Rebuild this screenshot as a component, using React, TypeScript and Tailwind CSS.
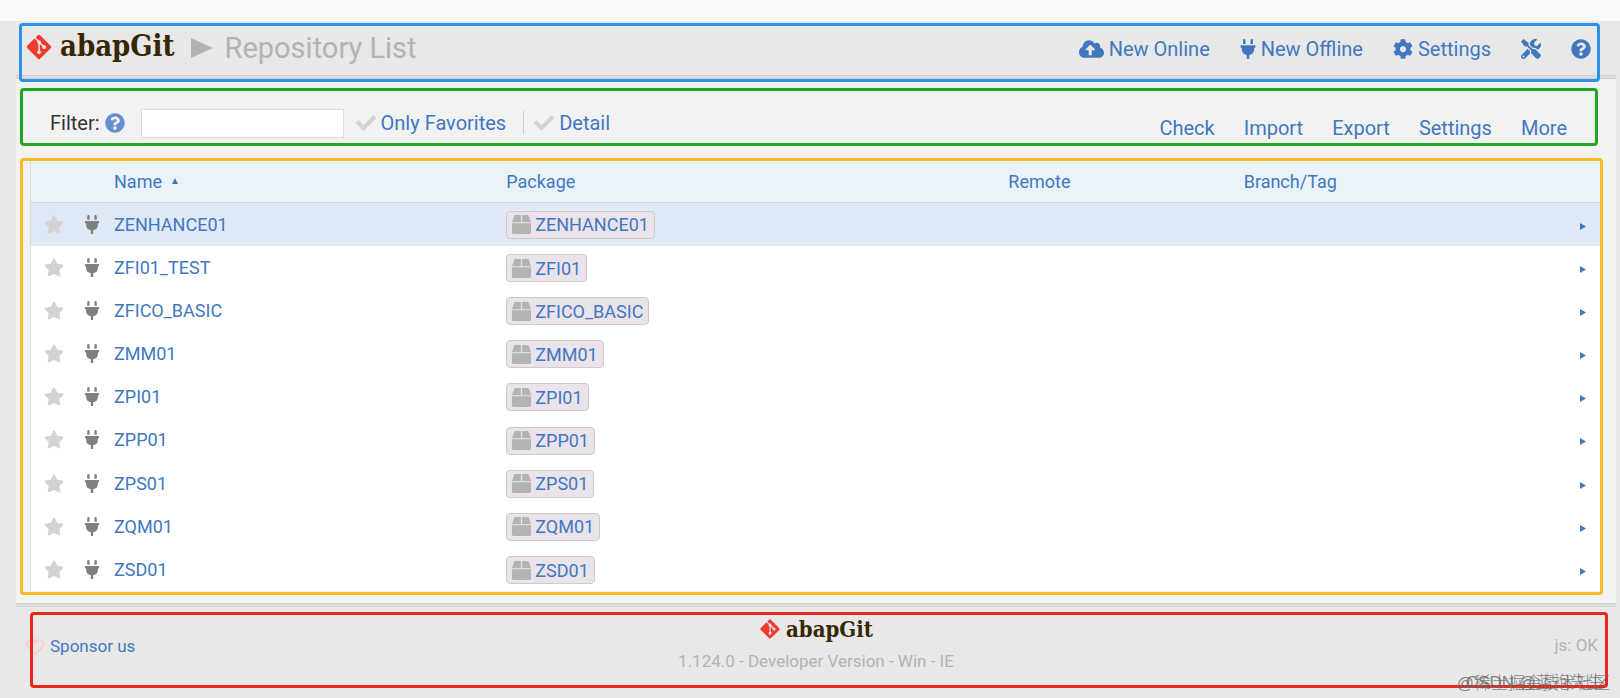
import React, { useState } from 'react';
import {
    FaBox,
    FaCheck,
    FaCloudUploadAlt,
    FaCog,
    FaGitAlt,
    FaPlug,
    FaQuestionCircle,
    FaRegHeart,
    FaStar,
    FaTools
} from 'react-icons/fa';

interface Repo {
    name: string;
    pkg: string;
}

const repos: Repo[] = [
    { name: 'ZENHANCE01', pkg: 'ZENHANCE01' },
    { name: 'ZFI01_TEST', pkg: 'ZFI01' },
    { name: 'ZFICO_BASIC', pkg: 'ZFICO_BASIC' },
    { name: 'ZMM01', pkg: 'ZMM01' },
    { name: 'ZPI01', pkg: 'ZPI01' },
    { name: 'ZPP01', pkg: 'ZPP01' },
    { name: 'ZPS01', pkg: 'ZPS01' },
    { name: 'ZQM01', pkg: 'ZQM01' },
    { name: 'ZSD01', pkg: 'ZSD01' }
];

const actions = ['Check', 'Import', 'Export', 'Settings', 'More'];

// Coloured outline drawn over a section
function Frame({ className }: { className: string }) {
    return <div aria-hidden="true" className={`pointer-events-none absolute z-10 rounded-[4px] border-[3px] ${className}`} />;
}

function Divider() {
    return <div className="h-[4px] border-y border-[#cfcfcf] bg-[#dedede]" />;
}

function Header() {
    return (
        <header className="relative flex h-[54px] items-center justify-between pr-[25px] pl-[9px] text-[20px] text-[#4078c0]">
            <Frame className="top-[2px] right-[16px] -bottom-[7px] left-[3px] border-[#2a93e8]" />
            <div className="flex items-center">
                <a href="#" className="flex items-center gap-[7px] pb-[3px] text-[#362701]">
                    <FaGitAlt className="size-[28px] text-[#f03c2e]" />
                    <span className="font-['DejaVu_Serif_Condensed','DejaVu_Serif',serif] text-[29px] leading-none font-bold">abapGit</span>
                </a>
                <svg viewBox="0 0 22 20" className="ml-[16px] h-[20px] w-[22px] fill-[#b3b3b3]">
                    <path d="M0 0 22 10 0 20z" />
                </svg>
                <h1 className="ml-[12px] text-[29px] leading-none text-[#b3b3b3]">Repository List</h1>
            </div>
            <nav className="flex items-center gap-[30px] pt-[2px]">
                <a href="#" className="flex items-center gap-[5px]">
                    <FaCloudUploadAlt className="h-[20px] w-[25px]" />
                    New Online
                </a>
                <a href="#" className="flex items-center gap-[5px]">
                    <FaPlug className="h-[20px] w-[16px]" />
                    New Offline
                </a>
                <a href="#" className="flex items-center gap-[5px]">
                    <FaCog className="size-[20px]" />
                    Settings
                </a>
                <a href="#" aria-label="Tools">
                    <FaTools className="size-[20px]" />
                </a>
                <a href="#" aria-label="Help">
                    <FaQuestionCircle className="size-[20px]" />
                </a>
            </nav>
        </header>
    );
}

function Toolbar() {
    const [filter, setFilter] = useState('');

    return (
        <div className="relative flex h-[82px] items-start justify-between pt-[28px] pr-[49px] pl-[34px] text-[20px] text-[#4078c0]">
            <Frame className="top-[9px] right-[18px] bottom-[15px] left-[4px] border-[#22a522]" />
            <div className="flex items-center">
                <label htmlFor="filter" className="text-[#333333]">Filter:</label>
                <FaQuestionCircle className="ml-[5px] size-[20px] text-[#6390cc]" />
                <input
                    id="filter"
                    type="text"
                    value={filter}
                    onChange={(e) => setFilter(e.target.value)}
                    className="mt-[2px] ml-[16px] h-[29px] w-[203px] border border-[#dddddd] bg-white px-2 text-[18px] text-[#333333] focus:outline-none"
                />
                <a href="#" className="ml-[12px] flex items-center gap-[5px]">
                    <FaCheck className="size-[20px] text-[#d3d3d3]" />
                    Only Favorites
                </a>
                <span className="ml-[17px] h-[23px] w-px bg-[#cccccc]" />
                <a href="#" className="ml-[10px] flex items-center gap-[5px]">
                    <FaCheck className="size-[20px] text-[#d3d3d3]" />
                    Detail
                </a>
            </div>
            <nav className="flex gap-[29px] pt-[6px]">
                {actions.map(action => (
                    <a key={action} href="#">{action}</a>
                ))}
            </nav>
        </div>
    );
}

function RepoTable() {
    const [selected, setSelected] = useState('ZENHANCE01');

    return (
        <div className="relative mr-[16px] ml-[14px] border-l border-[#dddddd] bg-white">
            <Frame className="-top-[3px] -right-[3px] -bottom-[4px] -left-[11px] border-[#f5bd22]" />
            <table className="h-[430px] w-full table-fixed text-left text-[18px] text-[#4078c0]">
                <thead>
                    <tr className="h-[41px] border-b border-[#d0d8dd] bg-[#eaf2fa]">
                        <th className="w-[47px]" />
                        <th className="w-[36px]" />
                        <th className="w-[25%] font-normal">
                            <a href="#" className="flex items-center gap-[10px]">
                                Name
                                <svg viewBox="0 0 6 6" className="size-[6px] fill-current">
                                    <path d="M3 0 6 6H0z" />
                                </svg>
                            </a>
                        </th>
                        <th className="w-[32%] font-normal"><a href="#">Package</a></th>
                        <th className="w-[15%] font-normal"><a href="#">Remote</a></th>
                        <th className="font-normal"><a href="#">Branch/Tag</a></th>
                        <th className="w-[20px]" />
                    </tr>
                </thead>
                <tbody>
                    {repos.map(repo => (
                        <tr
                            key={repo.name}
                            onClick={() => setSelected(repo.name)}
                            className={selected === repo.name ? 'bg-[#dfe9f5]' : ''}
                        >
                            <td>
                                <button aria-label="Favorite" className="block pl-[13px]">
                                    <FaStar className="h-[19px] w-[20px] text-[#d3d3d3]" />
                                </button>
                            </td>
                            <td>
                                <FaPlug className="ml-[6px] h-[19px] w-[16px] text-[#808080]" />
                            </td>
                            <td><a href="#">{repo.name}</a></td>
                            <td>
                                <a
                                    href="#"
                                    className="inline-flex h-[28px] items-center gap-[4px] rounded-[4px] border border-[#d0c8cf] bg-[#ebe3ea] px-[5px] align-middle"
                                >
                                    <FaBox className="size-[19px] text-[#b3b3b3]" />
                                    {repo.pkg}
                                </a>
                            </td>
                            <td />
                            <td />
                            <td>
                                <a href="#" aria-label={`Open ${repo.name}`} className="block pt-[4px]">
                                    <svg viewBox="0 0 6 7" className="h-[7px] w-[6px] fill-current">
                                        <path d="M0 0 6 3.500 0 7z" />
                                    </svg>
                                </a>
                            </td>
                        </tr>
                    ))}
                </tbody>
            </table>
        </div>
    );
}

function Footer() {
    return (
        <footer className="relative grid h-[91px] grid-cols-3 items-start px-[10px] text-[#b3b3b3]">
            <Frame className="top-[5px] right-[8px] bottom-[10px] left-[14px] border-[#ea261d]" />
            <a href="#" className="flex items-center gap-[6px] pt-[27px] text-[17px] text-[#4078c0]">
                <FaRegHeart className="size-[18px] text-[#ffc8d0]" />
                Sponsor us
            </a>
            <div className="flex flex-col items-center pt-[11px]">
                <a href="#" className="flex items-center gap-[5px] text-[#362701]">
                    <FaGitAlt className="size-[22px] text-[#f03c2e]" />
                    <span className="font-['DejaVu_Serif_Condensed','DejaVu_Serif',serif] text-[22px] leading-none font-bold">abapGit</span>
                </a>
                <div className="mt-[10px] text-[17px] leading-[22px] whitespace-nowrap">1.124.0 - Developer Version - Win - IE</div>
            </div>
            <div className="pt-[26px] pr-[8px] text-right text-[17px]">js: OK</div>
            {/* Two watermarks stamped on top of each other */}
            <div className="absolute right-[6px] bottom-[2px] z-20 font-['Liberation_Sans','Noto_Sans_CJK_SC',sans-serif] text-[17px] leading-[24px] font-light whitespace-nowrap text-[#666666]/80">
                @稀土掘金技术社区
            </div>
            <div className="absolute right-[12px] bottom-[3px] z-20 font-['Liberation_Sans','Noto_Sans_CJK_SC',sans-serif] text-[17px] leading-[24px] font-light whitespace-nowrap text-[#666666]/80">
                CSDN @蓝袍先生
            </div>
        </footer>
    );
}

export default function App() {
    return (
        <div className="min-h-screen bg-[#e8e8e8] font-['Roboto',sans-serif]">
            <div className="h-[21px] bg-[#f9f9f9]" />
            <div className="mr-[4px] ml-[16px]">
                <Header />
                <Divider />
                <main className="bg-[#f2f2f2] pb-[12px]">
                    <Toolbar />
                    <RepoTable />
                </main>
                <Divider />
                <Footer />
            </div>
        </div>
    );
}
